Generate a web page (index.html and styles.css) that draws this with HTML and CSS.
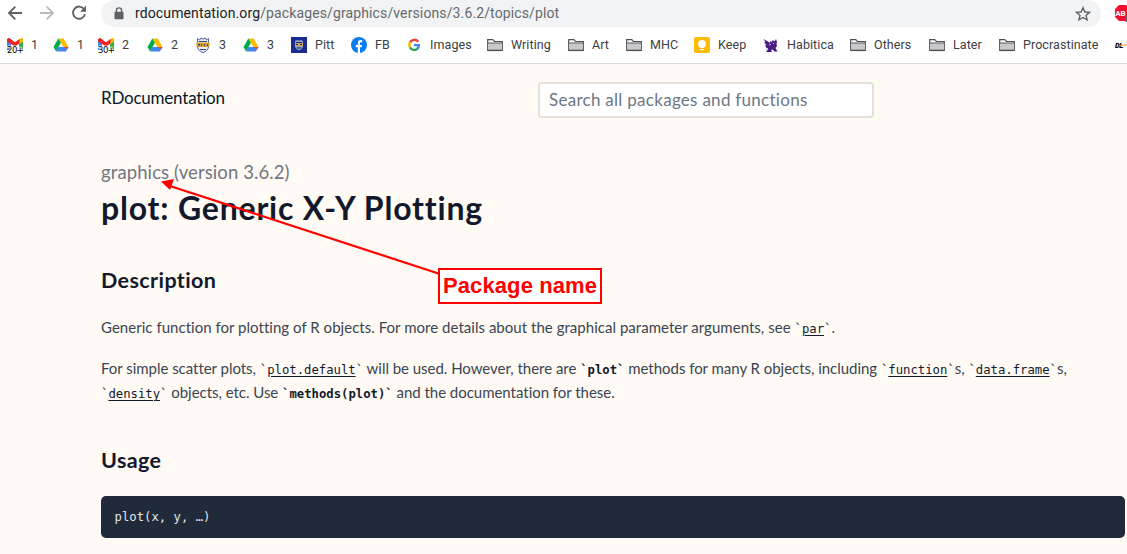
FILE: index.html
```html
<!DOCTYPE html>
<html lang="en">
<head>
<meta charset="utf-8">
<title>plot function - RDocumentation</title>
<link rel="stylesheet" href="styles.css">
</head>
<body>
<svg class="defs" width="0" height="0">
  <symbol id="folder" viewBox="0 0 16 16"><path d="M.7 13.3V2.7h5.1l1.6 1.8h7.9v8.8z" fill="#fff" stroke="#505256" stroke-width="1.2"/><path d="M1 6.2h14v7H1z" fill="#c9c9cc"/><path d="M.7 6h14.6" stroke="#505256" stroke-width="1"/><path d="M.7 13.4h14.6" stroke="#505256" stroke-width="1.4"/></symbol>
  <symbol id="drive" viewBox="0 0 16 16"><path d="M5.3 1.500h5.300L15.500 10h-5.200L8 6z" fill="#ffba00"/><path d="M5.300 1.500.5 10l2.700 4.400L8 6z" fill="#00ac47"/><path d="M5.800 10h9.700l-2.600 4.400H3.200z" fill="#4285f4"/><path d="M8 6.100 5.800 10h4.500z" fill="#fff"/><path d="M10.400 10h5.100l-1.300 2.300z" fill="#ea4335"/></symbol>
  <symbol id="mail" viewBox="0 0 16 16"><path d="M0 2h4v11H0z" fill="#4285f4"/><path d="M12 2h4v11h-4z" fill="#34a853"/><path d="M12 2.500 14.300.8Q16 .8 16 3v1.500l-4 3z" fill="#fbbc04"/><path d="M0 4.500V2.500Q.5.500 2.300 1L8 5.200 12.500 2v4.500L8 9.500z" fill="#ea2525"/></symbol>
</svg>
<header class="browser">
  <div class="toolbar">
    <svg class="nav-icon back" viewBox="0 0 16 16"><path d="M15 8H2M8.300 1.700 2 8l6.300 6.300" /></svg>
    <svg class="nav-icon forward" viewBox="0 0 16 16"><path d="M1 8h13M7.700 1.700 14 8l-6.300 6.300"/></svg>
    <svg class="nav-icon reload" viewBox="0 0 16 16"><path d="M13.200 4.300A6.100 6.100 0 1 0 14 9.300"/><path class="fill" d="M15 .8v6H9z"/></svg>
    <div class="address">
      <svg class="lock" viewBox="0 0 10 13"><path d="M2.400 5.500V3.500a2.600 2.600 0 0 1 5.200 0v2" fill="none" stroke="#5f6368" stroke-width="1.400"/><rect x=".5" y="4.700" width="9" height="7.500" rx="1" fill="#5f6368"/></svg>
      <span class="url"><span class="host">rdocumentation.org</span>/packages/graphics/versions/3.6.2/topics/plot</span>
      <svg class="star" viewBox="0 0 16 16"><path d="M8 1.700 9.900 6l4.600.4-3.500 3 1.100 4.500L8 11.500l-4.100 2.400L5 9.400l-3.500-3L6.100 6z" fill="none" stroke="#5f6368" stroke-width="1.400"/></svg>
    </div>
    <svg class="adblock" viewBox="0 0 16 18"><path d="M5 1h7l4 4v12H5l-4-4V5z" fill="#f70d2e"/><text x="1.200" y="12" font-size="8">AB</text><path d="M11.500 12h5v6h-5z" fill="#5f6368"/></svg>
  </div>
  <nav class="bookmarks">
    <a><svg><use href="#mail"/><text x="0" y="15.500">20+</text></svg>1</a>
    <a><svg><use href="#drive"/></svg>1</a>
    <a><svg><use href="#mail"/><text x="0" y="15.500">30+</text></svg>2</a>
    <a><svg><use href="#drive"/></svg>2</a>
    <a><svg viewBox="0 0 16 16"><path d="M2.500 1.500 4.500 3 6 .8 8 2.300 10 .8 11.500 3l2-1.500V10Q13 14 8 15.600 3 14 2.500 10z" fill="#e9ecf6" stroke="#5065a8" stroke-width="1"/><path d="M1.500 5.500h13V10h-13z" fill="#d9a02c"/><path d="M3 7h2v1.500H3zM6 7h1v2H6zM9 7h1v2H9zM12 7h1v2h-1zM5 12h6v1H5zM4 4h8v1H4z" fill="#34467d"/></svg>3</a>
    <a><svg><use href="#drive"/></svg>3</a>
    <a><svg viewBox="0 0 16 16"><path d="M0 0h16v16H0z" fill="#1b2a91"/><path d="M4 4l2-1 2 .6L10 3l2 1v6q-1 2.500-4 3.500-3-1-4-3.500z" fill="#8f9dbd"/><path d="M4 6.500h8v2.500H4z" fill="#d2a547"/><path d="M5 5h6v1H5zM5 7h2v1H5zM9 7h2v1H9zM6 10.500h4v1H6z" fill="#253064"/></svg>Pitt</a>
    <a><svg viewBox="0 0 16 16"><circle cx="8" cy="8" r="8" fill="#0a7cf2"/><path d="M6.800 16v-5.700h-2V8h2V6.300c0-2.200 1.200-3.200 3-3.200.7 0 1.400.1 1.400.1v2h-.9c-1 0-1.300.6-1.300 1.200V8h2.100l-.4 2.300H9V16z" fill="#fff"/></svg>FB</a>
    <a><svg viewBox="0 0 16 16" fill="none" stroke-width="2.400"><path d="M12.200 4.700A4.800 4.800 0 0 0 4 5.600" stroke="#ea4335"/><path d="M4.100 5.400a5 5 0 0 0 0 5.200" stroke="#fbbc05"/><path d="M4 10.400a4.800 4.800 0 0 0 7.500 1.300" stroke="#34a853"/><path d="M8 8.100h4.900q0 2.300-1.600 3.700" stroke="#4285f4"/></svg>Images</a>
    <a><svg><use href="#folder"/></svg>Writing</a>
    <a><svg><use href="#folder"/></svg>Art</a>
    <a><svg><use href="#folder"/></svg>MHC</a>
    <a><svg viewBox="0 0 16 16"><rect width="16" height="16" rx="2" fill="#ffbb00"/><circle cx="8" cy="7" r="3.900" fill="#fff"/><path d="M6 9h4v2H6zM6 12h4v1.300H6z" fill="#fff"/></svg>Keep</a>
    <a><svg viewBox="0 0 16 16"><path d="M.5 2 5 4.500 6.500 6 7 4l1.500 1L10 3l1.500 1.500L13 2l1 3-.5 2 .5 2-1.500 2 2 3.500H11l-1-2-2 .5 1 2H3l2-2.500L3.500 11 2 8.500 3.500 8 1 5.500l1.500-.5z" fill="#4b1c83"/><path d="m6 8 2-1M3 13l2-2M10 6l1 1" stroke="#cdb3e7"/></svg>Habitica</a>
    <a><svg><use href="#folder"/></svg>Others</a>
    <a><svg><use href="#folder"/></svg>Later</a>
    <a><svg><use href="#folder"/></svg>Procrastinate</a>
    <a><svg viewBox="0 0 16 16"><text class="dlc" x="0" y="11">DL</text><path d="M4 9 12 7.500" stroke="#f7941d" stroke-width="1.200"/></svg></a>
  </nav>
</header>
<main class="page">
  <div class="site-head">
    <a class="brand">RDocumentation</a>
    <div class="search">Search all packages and functions</div>
  </div>
  <p class="version">graphics (version 3.6.2)</p>
  <h1>plot: Generic X-Y Plotting</h1>
  <h2 class="h-desc">Description</h2>
  <p class="text">Generic function for plotting of R objects. For more details about the graphical parameter arguments, see <code>`<u>par</u>`</code>.</p>
  <p class="text second">For simple scatter plots, <code>`<u>plot.default</u>`</code> will be used. However, there are <code><b>`plot`</b></code> methods for many R objects, including <code>`<u>function</u>`</code>s, <code>`<u>data.frame</u>`</code>s,<br><code>`<u>density</u>`</code> objects, etc. Use <code><b>`methods(plot)`</b></code> and the documentation for these.</p>
  <h2 class="h-usage">Usage</h2>
  <pre>plot(x, y, …)</pre>
  <svg class="arrow" viewBox="0 0 290 100"><path d="M10 6 280 94" stroke="#f00" stroke-width="2.200"/><path d="M1 1.500 14-1 10 10z" fill="#f00"/></svg>
  <div class="callout">Package name</div>
</main>
</body>
</html>
```
FILE: styles.css
```css
* { box-sizing: border-box; }
body { margin: 0; width: 1127px; height: 554px; overflow: hidden; background: #fffaf3; font-family: Lato, sans-serif; color: #13192d; }
.defs { position: absolute; }
.browser { height: 64px; background: #fff; border-bottom: 1px solid #d9dbde; font-family: Roboto, sans-serif; overflow: hidden; }
.toolbar { display: flex; height: 27px; padding-left: 7px; align-items: flex-start; }
.nav-icon { width: 16px; height: 16px; margin-top: 5px; margin-right: 16px; fill: none; stroke: #5f6368; stroke-width: 1.9; flex: none; }
.nav-icon .fill { fill: #5f6368; stroke: none; }
.forward { stroke: #babcbe; }
.reload { margin-right: 14px; }
.address { display: flex; width: 1000px; height: 27px; padding: 0 10px 0 13px; background: #f1f3f4; border-radius: 14px; align-items: center; flex: none; }
.lock { width: 10px; height: 13px; margin-right: 11px; }
.url { flex: 1; font-size: 14px; line-height: 16px; padding-bottom: 1px; letter-spacing: .12px; color: #66696d; white-space: nowrap; }
.host { color: #202124; }
.star { width: 16px; height: 16px; }
.adblock { width: 16px; height: 18px; margin: 4px 0 0 13px; flex: none; font-family: Roboto, sans-serif; font-weight: 700; fill: #fff; }
.bookmarks { display: grid; grid-template-columns: 46px 45px 49px 48px 48px 48px 60px 55px 81px 81px 58px 68px 69px 87px 79px 70px 116px 16px; padding-left: 7px; height: 36px; align-items: center; }
.bookmarks a { display: flex; align-items: center; gap: 8px; font-size: 12.5px; line-height: 16px; letter-spacing: .08px; color: #3c4043; white-space: nowrap; }
.bookmarks svg { width: 16px; height: 16px; flex: none; overflow: visible; }
.bookmarks svg text { font: 8.5px "DejaVu Sans", sans-serif; letter-spacing: -.5px; fill: #000; stroke: #fff; stroke-width: 1.2px; paint-order: stroke; }
.bookmarks svg .dlc { font: italic 900 7.5px Roboto, sans-serif; stroke: none; }
.page { position: relative; height: 490px; padding: 18px 0 0 101px; }
.site-head { display: flex; height: 36px; align-items: center; }
.brand { width: 437px; font-size: 17px; letter-spacing: -.22px; line-height: 24px; margin-top: -4px; color: #05192d; }
.search { width: 336px; height: 36px; border: 2px solid #e5e1da; border-radius: 4px; background: #fff; padding: 0 9px; font-size: 17px; letter-spacing: .28px; line-height: 32px; color: #6c7785; }
.version { margin: 40px 0 0; font-size: 18.5px; line-height: 28px; letter-spacing: .1px; color: #6f7683; }
h1 { margin: 2px 0 0; font-size: 32px; line-height: 40px; font-weight: 700; letter-spacing: .8px; }
h2 { margin: 0; font-size: 21.5px; line-height: 28px; letter-spacing: .4px; font-weight: 700; }
.h-desc { margin-top: 38px; }
.text { margin: 21px 0 0; font-size: 15px; line-height: 24px; letter-spacing: .03px; color: #3b4454; white-space: nowrap; }
.second { margin-top: 17px; letter-spacing: -.03px; }
code, pre { font-family: "DejaVu Sans Mono", monospace; font-size: 12.25px; letter-spacing: 0; }
code { color: #13192d; line-height: 0; }
u { text-underline-offset: 2px; }
.h-usage { margin-top: 42px; }
pre { width: 1024px; height: 42px; margin: 22px 0 0; padding: 0 13.5px; line-height: 42px; background: #202a3a; color: #e1e5eb; border-radius: 5px; }
.arrow { position: absolute; left: 160px; top: 116px; width: 290px; height: 100px; overflow: visible; }
.callout { position: absolute; left: 438px; top: 204px; width: 164px; height: 36px; border: 2px solid #f00; background: #fff; padding-left: 3px; font: 700 22px/31px "Liberation Sans", sans-serif; letter-spacing: .1px; color: #f00; white-space: nowrap; }
```
